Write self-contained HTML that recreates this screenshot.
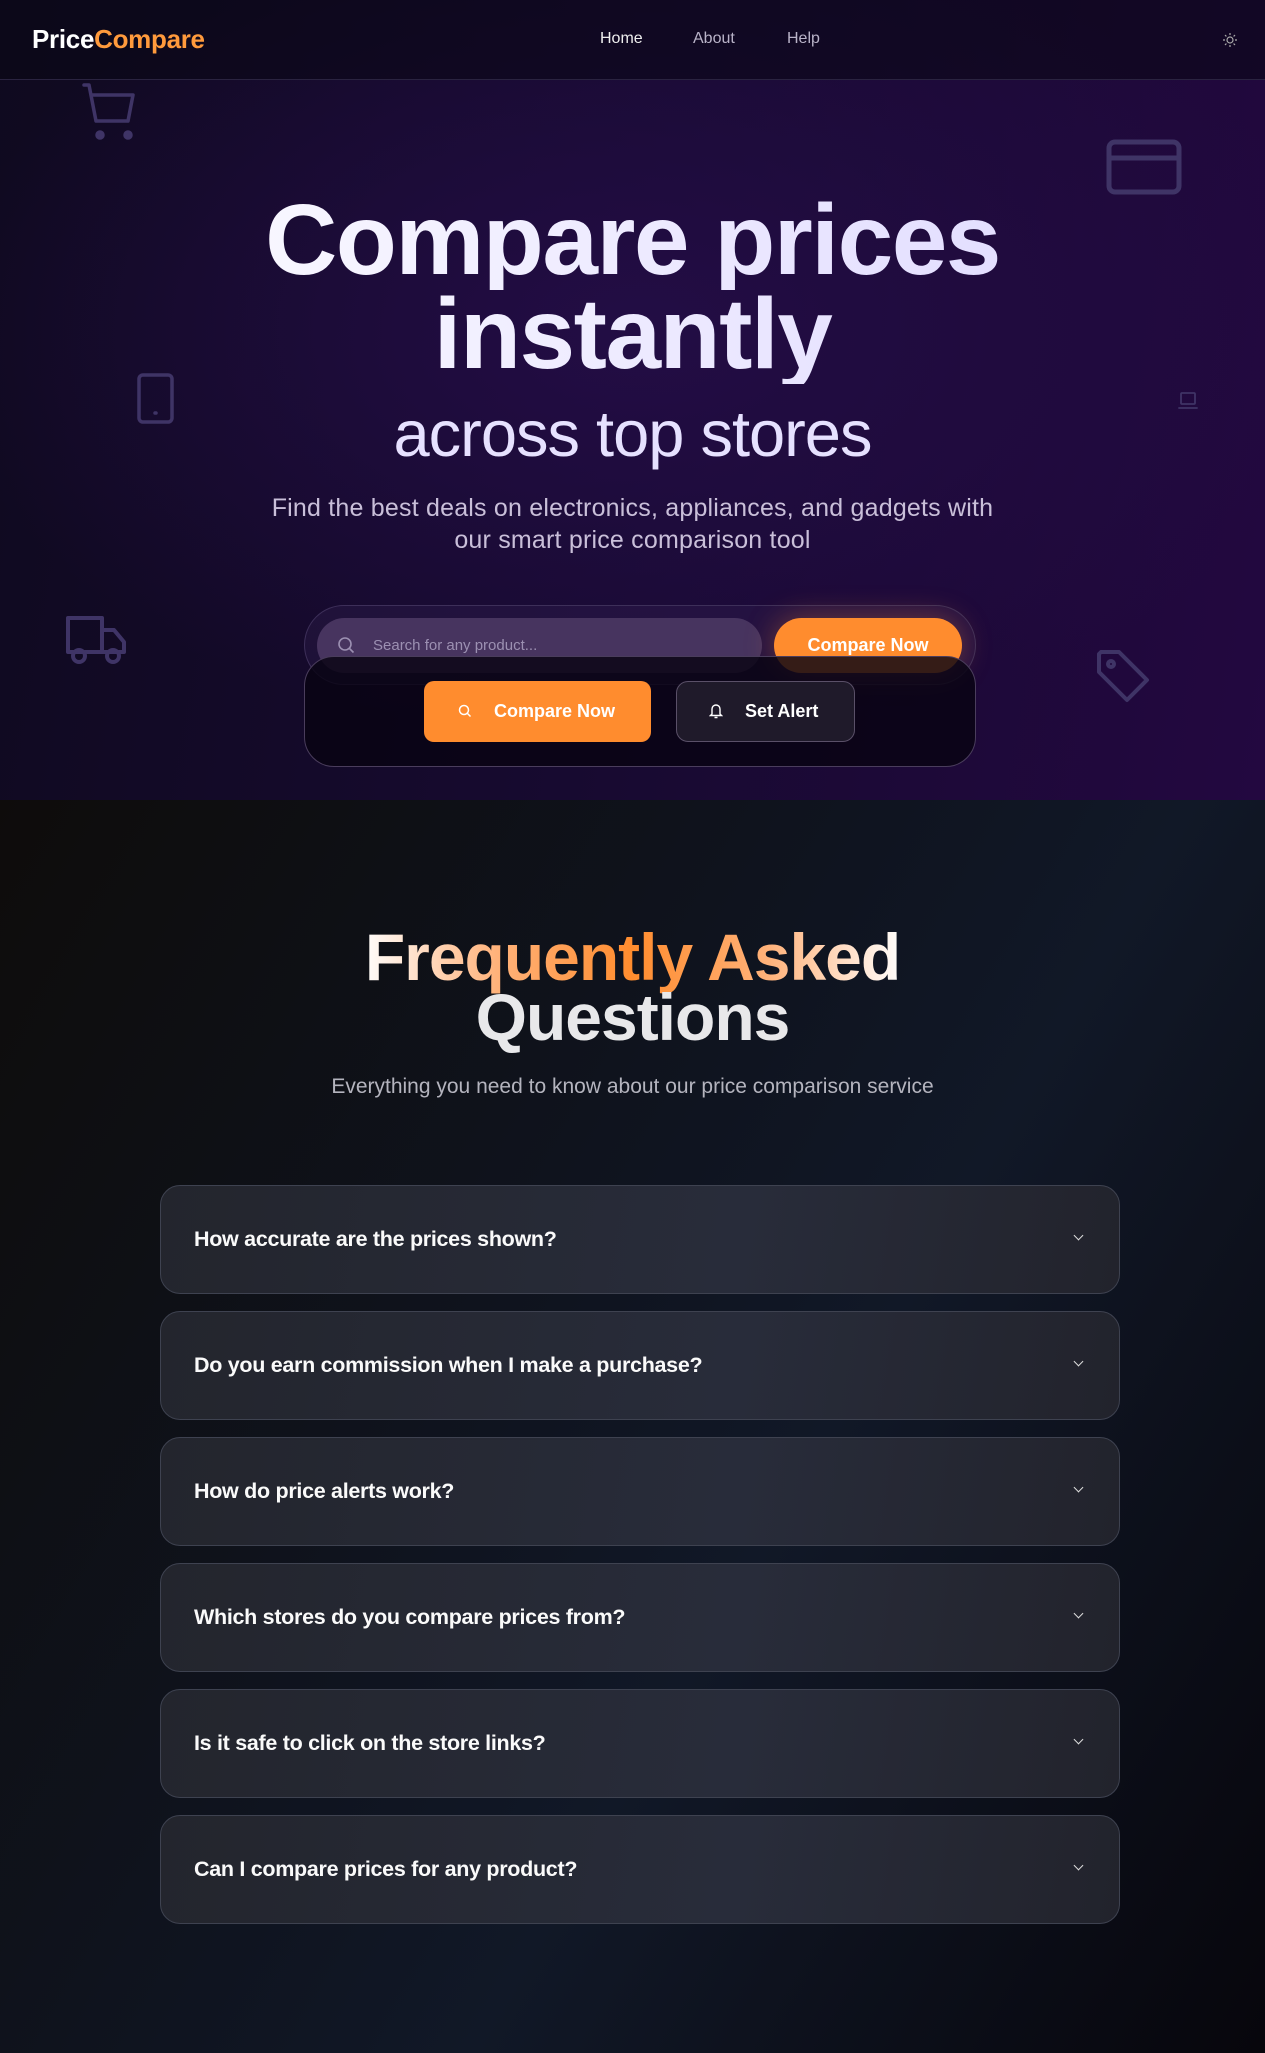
<!DOCTYPE html>
<html><head><meta charset="utf-8">
<style>
*{box-sizing:border-box;margin:0;padding:0}
body{width:1265px;height:2053px;overflow:hidden;font-family:"Liberation Sans",sans-serif;background:#0d0f17;color:#fff}
.hero{position:relative;height:800px;background:radial-gradient(ellipse 700px 420px at 640px 330px,#230d45 0%,rgba(35,13,69,0) 100%),linear-gradient(100deg,#0f0a1f 0%,#170a30 50%,#230840 100%);overflow:hidden}
nav{position:absolute;left:0;top:0;width:1265px;height:80px;border-bottom:1px solid #2a2340;background:rgba(10,6,22,.6)}
.logo{position:absolute;left:32px;top:24px;font-size:26px;font-weight:bold;letter-spacing:-.3px}
.logo span{color:#ff9a3c}
.links{position:absolute;top:30px;font-size:16px;color:#b9b3c8}
.ico{position:absolute;stroke:#3f3466;fill:none;stroke-width:2.4;stroke-linecap:round;stroke-linejoin:round}
h1{position:absolute;left:0;width:1265px;text-align:center;font-weight:900;letter-spacing:-1.5px;line-height:1;color:#eeeaff}
.sub{position:absolute;width:1265px;text-align:center;top:396px;font-size:65px;color:#e6e1ff;letter-spacing:-1px}
.p{position:absolute;width:1265px;text-align:center;top:492px;font-size:25px;line-height:32px;color:#c9bfd9;letter-spacing:.2px}
.sbox{position:absolute;left:304px;top:605px;width:672px;height:80px;border-radius:40px;border:1px solid #3d2f59;background:rgba(60,40,90,.25)}
.inp{position:absolute;left:317px;top:618px;width:445px;height:55px;border-radius:28px;background:#47345f;color:#9c90b2;font-size:15px;line-height:55px;padding-left:56px}
.cbtn{position:absolute;left:774px;top:618px;width:188px;height:55px;border-radius:28px;background:#ff8c2e;font-weight:bold;font-size:18px;text-align:center;line-height:55px;box-shadow:0 0 30px rgba(255,140,46,.35)}
.ov{position:absolute;left:304px;top:656px;width:672px;height:111px;border-radius:30px;border:1px solid #4a3d5c;background:rgba(8,4,18,.82)}
.b1{position:absolute;left:424px;top:681px;width:227px;height:61px;border-radius:10px;background:#ff8c2e;font-weight:bold;font-size:18px;line-height:61px;padding-left:70px}
.b2{position:absolute;left:676px;top:681px;width:179px;height:61px;border-radius:12px;border:1px solid #5a5068;background:#1f1a2a;font-weight:bold;font-size:18px;line-height:59px;padding-left:68px}
.faq{position:absolute;top:800px;left:0;width:1265px;height:1253px;background:linear-gradient(120deg,#0e0c0b 0%,#0f1420 45%,#111827 60%,#07060c 100%)}
.ft{position:absolute;width:1265px;text-align:center;font-weight:900;font-size:66px;letter-spacing:-1px;line-height:60px}
.item{position:absolute;left:160px;width:960px;height:109px;border-radius:20px;border:1px solid #3e4250;background:linear-gradient(100deg,#23252d,#282c3a 60%,#22232c);}
.item b{position:absolute;left:33px;top:41px;font-size:21.5px;letter-spacing:-.3px;color:#fafafa}
.item i{position:absolute;right:37px;top:46px;width:7px;height:7px;border-right:1.5px solid #ddd;border-bottom:1.5px solid #ddd;transform:rotate(45deg)}
</style></head><body>
<div class="hero">
<nav>
<div class="logo">Price<span>Compare</span></div>
<div class="links" style="left:600px;color:#eee">Home</div>
<div class="links" style="left:693px">About</div>
<div class="links" style="left:787px">Help</div>
<svg style="position:absolute;left:1222px;top:32px" width="16" height="16" viewBox="0 0 16 16" fill="none" stroke="#aaa" stroke-width="1.2"><circle cx="8" cy="8" r="3"/><path d="M8 1v2M8 13v2M1 8h2M13 8h2M3 3l1.4 1.4M11.6 11.6L13 13M3 13l1.4-1.4M11.6 4.4L13 3"/></svg>
</nav>
<svg class="ico" style="left:80px;top:82px;stroke-width:3.5" width="64" height="62" viewBox="0 0 64 62"><path d="M4 3h5l7 36h32l5-26H12"/><circle cx="20" cy="53" r="3" fill="#3f3466"/><circle cx="48" cy="53" r="3" fill="#3f3466"/></svg>
<svg class="ico" style="left:1106px;top:138px;stroke-width:5" width="76" height="58" viewBox="0 0 76 58"><rect x="3" y="4" width="70" height="50" rx="6"/><path d="M3 20h70"/></svg>
<svg class="ico" style="left:136px;top:372px;stroke-width:3.5" width="40" height="54" viewBox="0 0 40 54"><rect x="3" y="3" width="33" height="47" rx="4"/><path d="M19 41h1"/></svg>
<svg class="ico" style="left:1176px;top:390px;stroke-width:1.8" width="24" height="22" viewBox="0 0 24 22"><rect x="5" y="3" width="14" height="11" rx="1"/><path d="M3 18h18"/></svg>
<svg class="ico" style="left:65px;top:612px;stroke-width:4" width="64" height="56" viewBox="0 0 64 56"><path d="M3 6h34v34H3zM37 18h12l10 12v10H37"/><circle cx="14" cy="44" r="6"/><circle cx="48" cy="44" r="6"/></svg>
<svg class="ico" style="left:1095px;top:648px;stroke-width:4" width="58" height="58" viewBox="0 0 58 58"><path d="M4 6v18l28 28 20-20L24 4H6z"/><circle cx="16" cy="16" r="3"/></svg>
<h1 style="top:190px;font-size:100px;background:linear-gradient(90deg,#fff,#dcd6ff);-webkit-background-clip:text;color:transparent">Compare prices</h1>
<h1 style="top:284px;font-size:100px;background:linear-gradient(90deg,#fff,#dcd6ff);-webkit-background-clip:text;color:transparent;left:0">instantly</h1>
<div class="sub">across top stores</div>
<div class="p">Find the best deals on electronics, appliances, and gadgets with<br>our smart price comparison tool</div>
<div class="sbox"></div>
<div class="inp">Search for any product...</div>
<svg style="position:absolute;left:337px;top:636px" width="19" height="19" viewBox="0 0 19 19" fill="none" stroke="#9c90b2" stroke-width="1.6"><circle cx="8" cy="8" r="6"/><path d="M12.5 12.5l4 4"/></svg>
<div class="cbtn">Compare Now</div>
<div class="ov"></div>
<div class="b1">Compare Now</div>
<svg style="position:absolute;left:458px;top:704px" width="14" height="14" viewBox="0 0 14 14" fill="none" stroke="#fff" stroke-width="1.5"><circle cx="6" cy="6" r="4.5"/><path d="M9.5 9.5l3 3"/></svg>
<div class="b2">Set Alert</div>
<svg style="position:absolute;left:709px;top:703px" width="14" height="16" viewBox="0 0 14 16" fill="none" stroke="#fff" stroke-width="1.4"><path d="M3 11V6a4 4 0 018 0v5l1.5 1.5h-11zM5.5 14.5h3"/></svg>
</div>
<div class="faq">
<div class="ft" style="top:127px"><span style="background:linear-gradient(90deg,#fff 0%,#ffb27a 25%,#ff8c2e 50%,#ffb27a 75%,#fff 100%);-webkit-background-clip:text;color:transparent;padding:0 4px">Frequently Asked</span></div>
<div class="ft" style="top:187px;color:#e8e8ea">Questions</div>
<div style="position:absolute;width:1265px;text-align:center;top:275px;font-size:21px;color:#b4b4be">Everything you need to know about our price comparison service</div>
</div>
<div class="item" style="top:1185px"><b>How accurate are the prices shown?</b><i></i></div>
<div class="item" style="top:1311px"><b>Do you earn commission when I make a purchase?</b><i></i></div>
<div class="item" style="top:1437px"><b>How do price alerts work?</b><i></i></div>
<div class="item" style="top:1563px"><b>Which stores do you compare prices from?</b><i></i></div>
<div class="item" style="top:1689px"><b>Is it safe to click on the store links?</b><i></i></div>
<div class="item" style="top:1815px"><b>Can I compare prices for any product?</b><i></i></div>
</body></html>
